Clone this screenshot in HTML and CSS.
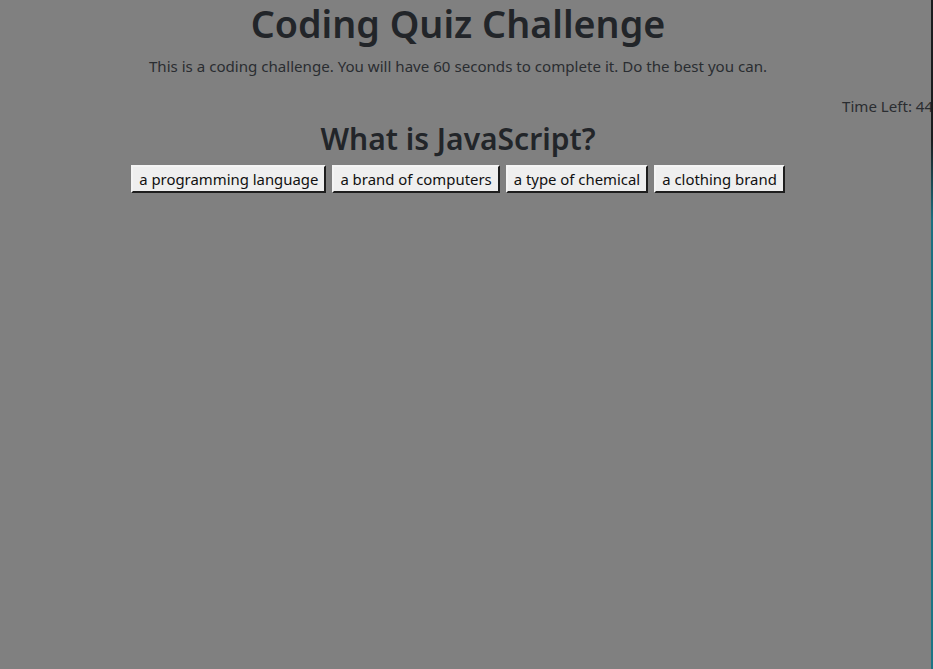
FILE: index.html
```html
<!DOCTYPE html>
<html>
<head>
<meta charset="utf-8">
<link rel="stylesheet" href="styles.css">
</head>
<body>
<div class="page">
  <header class="intro">
    <h1 class="title">Coding Quiz Challenge</h1>
    <p class="lead">This is a coding challenge. You will have 60 seconds to complete it. Do the best you can.</p>
  </header>
  <div class="timer-row"><span class="timer">Time Left: 44</span></div>
  <section class="quiz">
    <h2 class="question">What is JavaScript?</h2>
    <div class="answers">
      <button class="answer">a programming language</button>
      <button class="answer">a brand of computers</button>
      <button class="answer">a type of chemical</button>
      <button class="answer">a clothing brand</button>
    </div>
  </section>
</div>
<div class="edge"></div>
</body>
</html>
```
FILE: styles.css
```css
html, body {
  margin: 0;
  height: 100%;
  overflow: hidden;
}
body {
  background: #808080;
  color: #222529;
  font-family: "Noto Sans", "Open Sans", sans-serif;
  font-size: 15.1px;
  line-height: 24px;
}
.page {
  width: 916px;
}
.intro {
  text-align: center;
}
.title {
  margin: 0 0 6px;
  font-size: 37.7px;
  font-weight: 600;
  line-height: 48px;
}
.lead {
  margin: 0 0 16px;
  color: #2a2d31;
}
.timer-row {
  padding-left: 842px;
  white-space: nowrap;
  height: 26px;
}
.timer {
  color: #2a2d31;
}
.quiz {
  text-align: center;
}
.question {
  margin: 0 0 7px;
  font-size: 30px;
  font-weight: 600;
  line-height: 38px;
}
.answers {
  display: flex;
  justify-content: center;
  gap: 6px;
}
.answer {
  font-family: inherit;
  font-size: 14.9px;
  line-height: 20px;
  color: #111;
  background: #efefef;
  padding: 2px 6px;
  border: 2px solid;
  border-color: #f4f4f4 #1e1e1e #1e1e1e #f4f4f4;
  border-radius: 0;
}
.edge {
  position: fixed;
  top: 0;
  right: 0;
  width: 2px;
  height: 100%;
  background: linear-gradient(#1a1c1e 0, #1a1c1e 140px, #1d6f80 220px, #1d7585 100%);
}
```
